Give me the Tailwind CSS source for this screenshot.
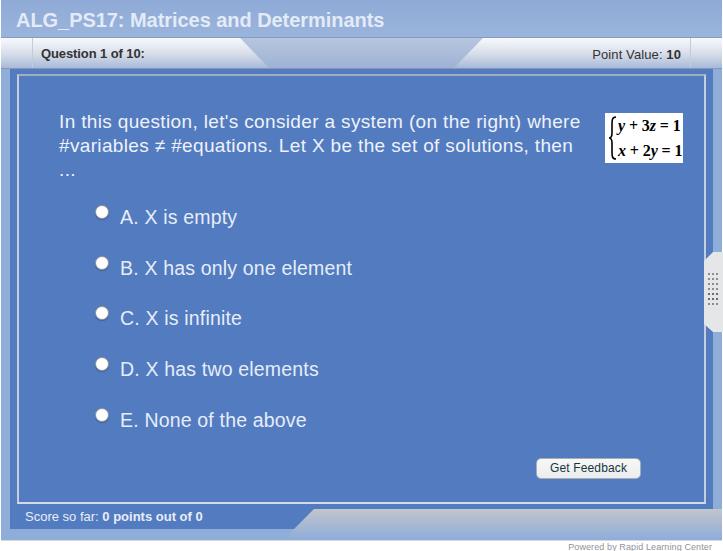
<!DOCTYPE html>
<html lang="en">
<head>
  <meta charset="UTF-8"/>
  <title>ALG_PS17: Matrices and Determinants</title>
  <script src="https://cdn.jsdelivr.net/npm/@tailwindcss/browser@4"></script>
</head>
<body class="bg-white w-[723px] h-[551px] overflow-hidden font-['Liberation_Sans',Arial,sans-serif]">

<div class="relative w-[723px] h-[551px]">
  <!-- outer frame -->
  <div class="ml-px w-[721px] h-[541px] bg-[#8fadd9] border-b border-[#d8d8d8] flex flex-col">

    <div class="h-[38px] border-b border-[#7f9cc6] bg-gradient-to-b from-[#8faad6] to-[#9ab4dc] pl-[15px] pt-[10px] text-[20px] leading-[21px] font-bold text-[#e3ebf7] tracking-[-0.05px]">
      ALG_PS17: Matrices and Determinants
    </div>

    <!-- question bar -->
    <div class="relative h-[31px] bg-gradient-to-b from-[#f8f9fc] via-[#d9dfeb] to-[#a9bad7] border-b border-[#8298bb] flex items-center justify-between text-[13px]">
      <div class="absolute left-[239px] top-0 w-[243px] h-[30px] bg-gradient-to-b from-[#b8c6de] to-[#9db2d5] [clip-path:polygon(0_0,100%_0,88%_100%,12%_100%)]"></div>
      <div class="relative h-full ml-[31px] pl-[8px] border-l border-[#c3cbd9] font-bold text-[#333] leading-[31px] tracking-[-0.1px]">Question 1 of 10:</div>
      <div class="relative h-full mr-[31px] pr-[9px] border-r border-[#c3cbd9] text-[#333] leading-[33px] tracking-[0.1px]">Point Value: <b>10</b></div>
    </div>

    <!-- blue panel -->
    <div class="relative ml-[9px] mr-[9px] h-[460px] bg-[#537bc0] pt-[5px] px-[7px]">
      <div class="h-[430px] border-2 border-t-[#a3adc0] border-x-[#c5cedd] border-b-[#d3dae8] pt-[34px] relative">
        <div class="flex justify-between pl-[40px] pr-[21px]">
          <p class="w-[530px] text-[19px] leading-[24px] text-[#eef2fa] tracking-[0.35px]">In this question, let's consider a system (on the right) where<br/>#variables ≠ #equations. Let X be the set of solutions, then<br/>...</p>
          <div class="w-[78px] h-[50px] mt-[3px] bg-white flex items-center font-['Liberation_Serif',serif] font-bold text-black">
            <svg width="9" height="44" viewBox="0 0 9 44" class="ml-[3px]"><path d="M8 1C4 1 4 4 4 10V17C4 20 3 22 1 22C3 22 4 24 4 27V35C4 40 4 43 8 43" fill="none" stroke="#000" stroke-width="1.6"/></svg>
            <div class="ml-px text-[16px] leading-[25px] italic whitespace-nowrap tracking-[-0.1px]">
              <div>y<span class="not-italic"> + 3</span>z<span class="not-italic"> = 1</span></div>
              <div>x<span class="not-italic"> + 2</span>y<span class="not-italic"> = 1</span></div>
            </div>
          </div>
        </div>

        <div class="mt-[19px] pl-[76px] flex flex-col text-[#e6edf8] text-[19.5px] leading-[24px] tracking-[0.18px]">
          <div class="h-[50.7px] flex items-start gap-[11px]"><span class="mt-[4px] w-[14px] h-[14px] rounded-full bg-white border border-[#8f939c] shadow-[0_1px_1px_#3d5f9f]"></span><span class="mt-[4px]">A. X is empty</span></div>
          <div class="h-[50.7px] flex items-start gap-[11px]"><span class="mt-[4px] w-[14px] h-[14px] rounded-full bg-white border border-[#8f939c] shadow-[0_1px_1px_#3d5f9f]"></span><span class="mt-[4px]">B. X has only one element</span></div>
          <div class="h-[50.7px] flex items-start gap-[11px]"><span class="mt-[4px] w-[14px] h-[14px] rounded-full bg-white border border-[#8f939c] shadow-[0_1px_1px_#3d5f9f]"></span><span class="mt-[4px]">C. X is infinite</span></div>
          <div class="h-[50.7px] flex items-start gap-[11px]"><span class="mt-[4px] w-[14px] h-[14px] rounded-full bg-white border border-[#8f939c] shadow-[0_1px_1px_#3d5f9f]"></span><span class="mt-[4px]">D. X has two elements</span></div>
          <div class="h-[50.7px] flex items-start gap-[11px]"><span class="mt-[4px] w-[14px] h-[14px] rounded-full bg-white border border-[#8f939c] shadow-[0_1px_1px_#3d5f9f]"></span><span class="mt-[4px]">E. None of the above</span></div>
        </div>

        <div class="flex justify-end pr-[63px] mt-[4px]">
          <button class="w-[105px] h-[21px] rounded-[5px] border border-[#a8adb3] bg-gradient-to-b from-[#f7f8f8] to-[#ebeded] text-[12px] leading-[19px] text-[#16353f] tracking-[0.15px]">Get Feedback</button>
        </div>
      </div>

      <div class="pl-[8px] pt-[4px] text-[13px] leading-[18px] text-[#e8edf7]">Score so far: <b>0 points out of 0</b></div>
      <!-- grey strip bottom right -->
      <div class="absolute right-[-9px] bottom-[-10px] w-[438px] h-[30px] bg-gradient-to-b from-[#c2c5cc] to-[#8fadd9] [clip-path:polygon(30px_0,100%_0,100%_100%,0_100%)]"></div>
    </div>
  </div>

  <!-- side handle -->
  <div class="absolute left-[704px] top-[252px] w-[19px] h-[80px] bg-[#e4e6e8] [clip-path:polygon(9px_0,100%_0,100%_100%,9px_100%,0_72px,0_9px)] grid grid-cols-[2px_2px_2px] gap-x-[2px] gap-y-[3px] content-start pt-[21px] pl-[4px]">
    <i class="w-[2px] h-[2px] bg-[#8a8d90]"></i><i class="w-[2px] h-[2px] bg-[#8a8d90]"></i><i class="w-[2px] h-[2px] bg-[#8a8d90]"></i>
    <i class="w-[2px] h-[2px] bg-[#8a8d90]"></i><i class="w-[2px] h-[2px] bg-[#8a8d90]"></i><i class="w-[2px] h-[2px] bg-[#8a8d90]"></i>
    <i class="w-[2px] h-[2px] bg-[#8a8d90]"></i><i class="w-[2px] h-[2px] bg-[#8a8d90]"></i><i class="w-[2px] h-[2px] bg-[#8a8d90]"></i>
    <i class="w-[2px] h-[2px] bg-[#8a8d90]"></i><i class="w-[2px] h-[2px] bg-[#8a8d90]"></i><i class="w-[2px] h-[2px] bg-[#8a8d90]"></i>
    <i class="w-[2px] h-[2px] bg-[#6a6d70]"></i><i class="w-[2px] h-[2px] bg-[#6a6d70]"></i><i class="w-[2px] h-[2px] bg-[#6a6d70]"></i>
    <i class="w-[2px] h-[2px] bg-[#6a6d70]"></i><i class="w-[2px] h-[2px] bg-[#6a6d70]"></i><i class="w-[2px] h-[2px] bg-[#6a6d70]"></i>
    <i class="w-[2px] h-[2px] bg-[#8a8d90]"></i><i class="w-[2px] h-[2px] bg-[#8a8d90]"></i><i class="w-[2px] h-[2px] bg-[#8a8d90]"></i>
  </div>

  <div class="text-right pr-[11px] text-[9px] leading-[11px] mt-px text-[#8f9399] tracking-[0.1px]">Powered by Rapid Learning Center</div>
</div>

</body>
</html>
